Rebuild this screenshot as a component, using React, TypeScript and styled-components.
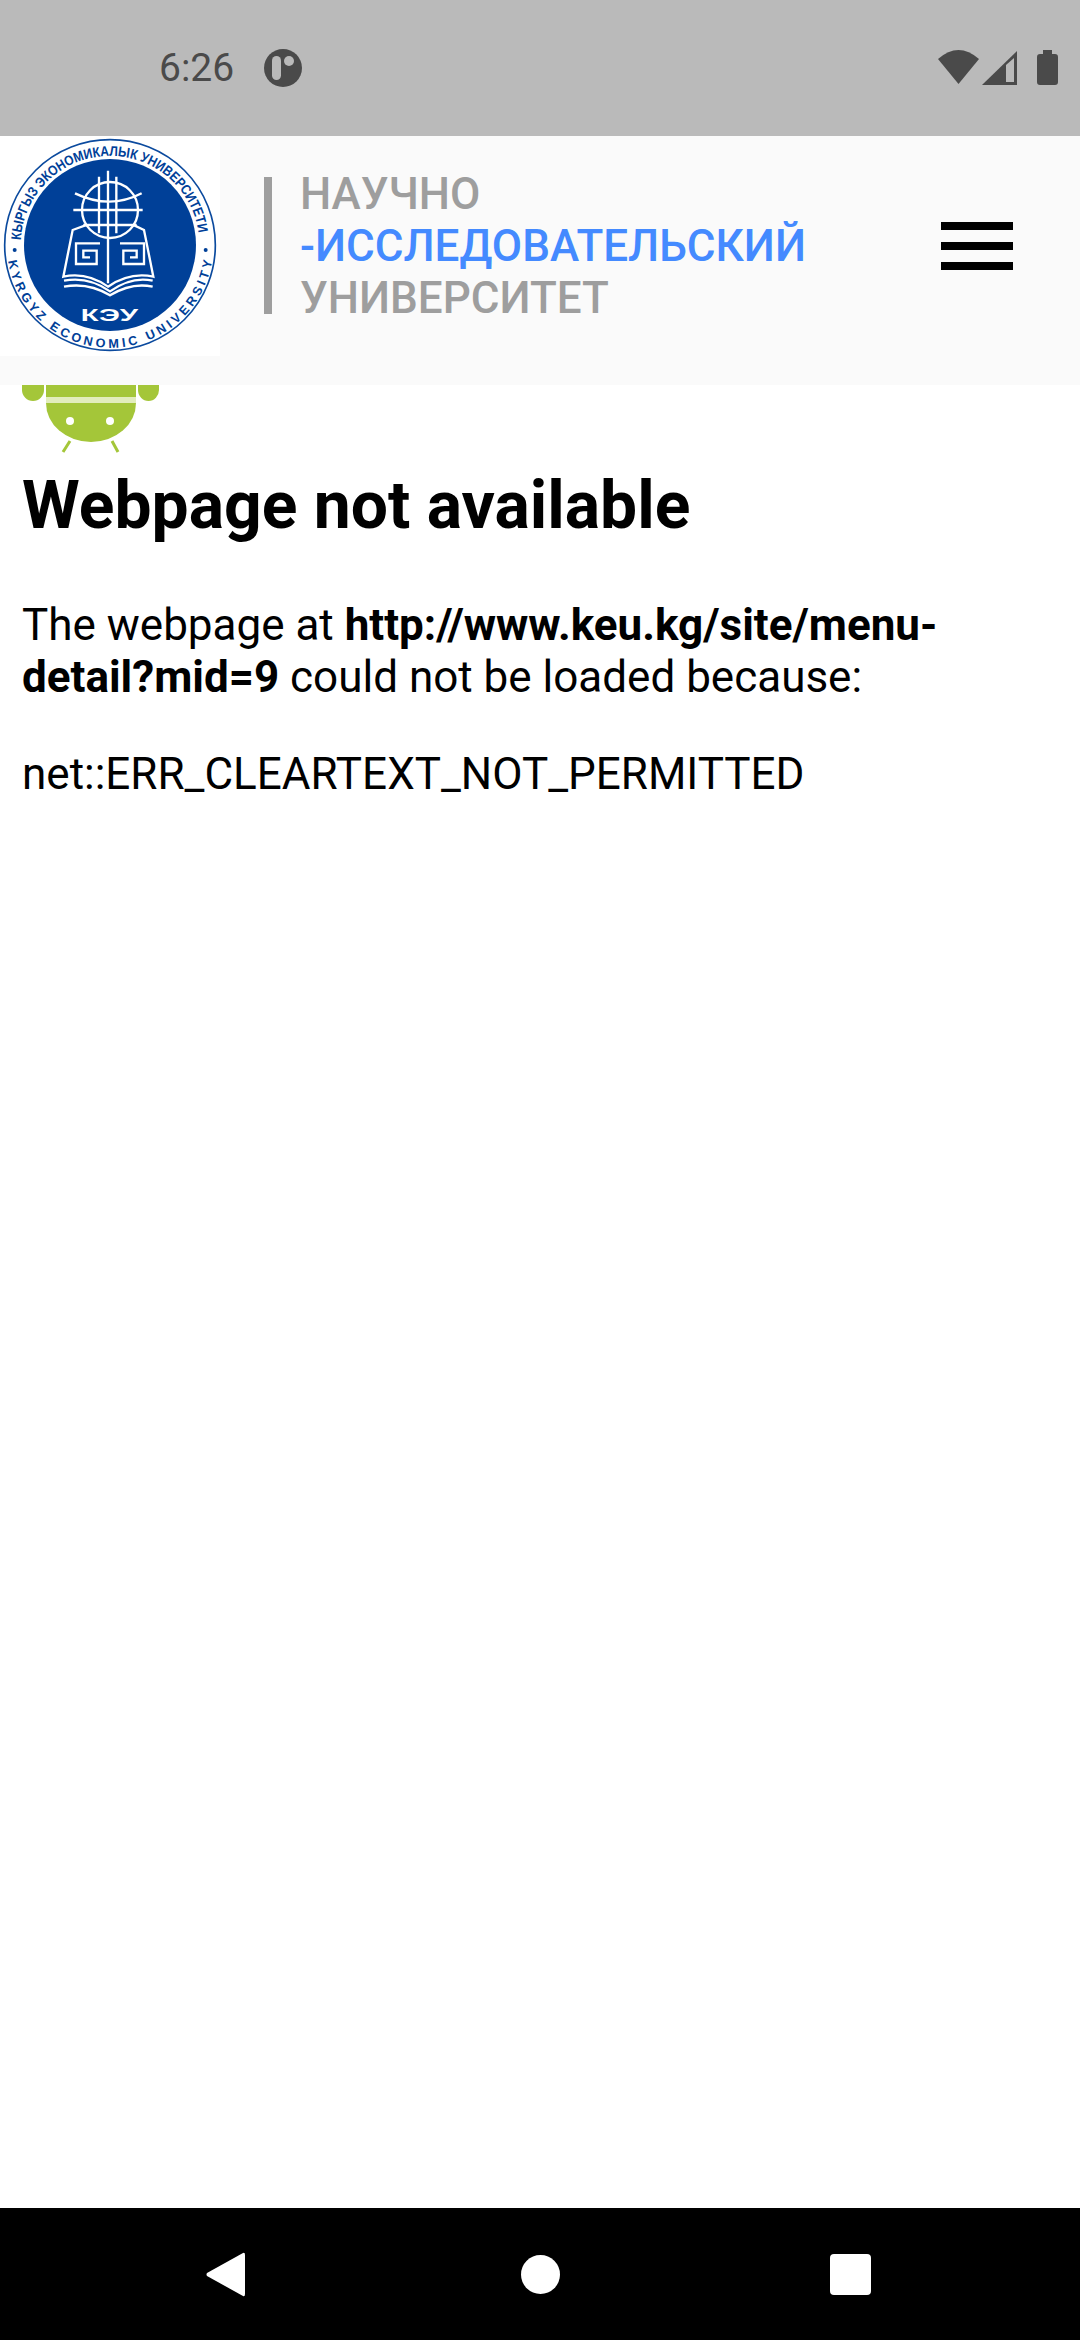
import React from "react";
import styled, { createGlobalStyle } from "styled-components";

const GlobalStyle = createGlobalStyle`
  html, body {
    margin: 0;
    padding: 0;
    background: #ffffff;
    font-family: Roboto, "Noto Sans", sans-serif;
  }
`;

const Screen = styled.div`
  width: 1080px;
  height: 2340px;
  display: flex;
  flex-direction: column;
  overflow: hidden;
  background: #ffffff;
`;

const StatusBar = styled.div`
  height: 136px;
  flex: none;
  background: #bababa;
  display: flex;
  align-items: center;
  justify-content: space-between;
  padding: 0 21px 0 159px;
  color: #4a4a4a;
`;

const StatusLeft = styled.div`
  display: flex;
  align-items: center;
  gap: 30px;
`;

const Clock = styled.span`
  font-size: 39px;
  line-height: 46px;
`;

const StatusIcons = styled.svg`
  display: block;
`;

const Header = styled.header`
  height: 249px;
  flex: none;
  background: #fafafa;
  display: flex;
  align-items: flex-start;
`;

const LogoBox = styled.div`
  width: 220px;
  height: 220px;
  flex: none;
  background: #ffffff;
`;

const Tagline = styled.div`
  margin: 41px 0 0 44px;
  padding-left: 28px;
  border-left: 8px solid #9e9e9e;
  width: 560px;
  height: 137px;
  flex: none;
  display: flex;
  flex-direction: column;
  justify-content: center;
`;

const TagLine = styled.div<{ $accent?: boolean }>`
  font-size: 44px;
  line-height: 52px;
  font-weight: 500;
  white-space: nowrap;
  color: ${(props) => (props.$accent ? "#448aff" : "#9e9e9e")};
`;

const Burger = styled.div`
  width: 72px;
  margin: 86px 0 0 81px;
  display: flex;
  flex-direction: column;
  gap: 12px;
`;

const BurgerBar = styled.span`
  display: block;
  height: 8px;
  background: #000000;
`;

const Content = styled.main`
  flex: 1;
  padding: 0 22px;
  color: #000000;
`;

const AndroidMark = styled.svg`
  display: block;
  margin-bottom: 16px;
`;

const Title = styled.h1`
  margin: 0 0 56px;
  font-size: 66px;
  line-height: 74px;
  font-weight: 700;
`;

const Paragraph = styled.p`
  margin: 0 0 45px;
  font-size: 44px;
  line-height: 52px;
`;

const NavBar = styled.nav`
  height: 132px;
  flex: none;
  background: #000000;
  display: flex;
  align-items: center;
  padding: 0 0 0 206px;
`;

const NavIcon = styled.svg<{ $gap: number }>`
  display: block;
  margin-right: ${(props) => props.$gap}px;
`;

const RING = "#0b4a9e";
const BLUE = "#004098";

const KeuLogo = () => (
  <svg width="220" height="220" viewBox="0 18 660 660">
    <defs>
      <path id="topArc" d="M 62.4 331 A 268 268 0 0 1 597.6 331" />
      <path id="bottomArc" d="M 24 393 A 310 310 0 0 0 636 393" />
    </defs>
    <circle cx="330" cy="345" r="316" fill="#ffffff" stroke={RING} strokeWidth="5" />
    <circle cx="330" cy="345" r="258" fill={BLUE} />
    <text fontFamily="'Liberation Sans', sans-serif" fontWeight="700" fontSize="42" fill={BLUE}>
      <textPath href="#topArc" textLength="790" lengthAdjust="spacingAndGlyphs">
        КЫРГЫЗ ЭКОНОМИКАЛЫК УНИВЕРСИТЕТИ
      </textPath>
    </text>
    <text fontFamily="'Liberation Sans', sans-serif" fontWeight="700" fontSize="38" fill={BLUE}>
      <textPath href="#bottomArc" textLength="875" lengthAdjust="spacing">
        KYRGYZ ECONOMIC UNIVERSITY
      </textPath>
    </text>
    <circle cx="44" cy="360" r="6" fill={BLUE} />
    <circle cx="617" cy="360" r="6" fill={BLUE} />
    <g fill="none" stroke="#ffffff" strokeWidth="7">
      <circle cx="330" cy="240" r="84" />
      <path d="M 297 140 V 310 M 324 122 V 460 M 349 140 V 310" />
      <path d="M 220 240 H 428 M 225 190 Q 330 240 425 190 M 250 285 H 410" />
      <path d="M 262 284 L 218 300 L 190 440 Q 260 425 324 470 Q 390 425 460 440 L 432 300 L 398 284" />
      <path d="M 300 340 H 228 V 402 H 290 V 362 H 250 V 382 H 270" />
      <path d="M 360 340 H 432 V 402 H 370 V 362 H 410 V 382 H 390" />
      <path d="M 192 452 Q 265 438 330 484 Q 395 438 458 452" />
      <path d="M 192 470 Q 265 456 330 496 Q 395 456 458 470" />
    </g>
    <text
      x="328"
      y="574"
      textAnchor="middle"
      fontFamily="'Liberation Sans', sans-serif"
      fontWeight="700"
      fontSize="50"
      fill="#ffffff"
      textLength="172"
      lengthAdjust="spacingAndGlyphs"
    >
      КЭУ
    </text>
  </svg>
);

const App = () => (
  <>
    <GlobalStyle />
    <Screen>
      <StatusBar>
        <StatusLeft>
          <Clock>6:26</Clock>
          <svg width="38" height="38" viewBox="0 0 38 38">
            <circle cx="19" cy="19" r="19" fill="#4a4a4a" />
            <rect x="8" y="7" width="9" height="24" rx="4.5" fill="#bababa" />
            <circle cx="25" cy="12" r="5" fill="#bababa" />
          </svg>
        </StatusLeft>
        <StatusIcons width="121" height="36" viewBox="0 0 121 36">
          <path d="M0 9 Q20.5 -9 41 9 L20.5 34 Z" fill="#4a4a4a" />
          <path d="M44 35 L79 1 V35 Z" fill="#4a4a4a" />
          <path d="M68 15 L76 8 V32 H68 Z" fill="#bababa" />
          <path d="M105 0 H114 V4 H117 Q120 4 120 7 V32 Q120 35 117 35 H102 Q99 35 99 32 V7 Q99 4 102 4 H105 Z" fill="#4a4a4a" />
        </StatusIcons>
      </StatusBar>
      <Header>
        <LogoBox>
          <KeuLogo />
        </LogoBox>
        <Tagline>
          <TagLine>НАУЧНО</TagLine>
          <TagLine $accent>-ИССЛЕДОВАТЕЛЬСКИЙ</TagLine>
          <TagLine>УНИВЕРСИТЕТ</TagLine>
        </Tagline>
        <Burger>
          <BurgerBar />
          <BurgerBar />
          <BurgerBar />
        </Burger>
      </Header>
      <Content>
        <AndroidMark width="140" height="68" viewBox="0 0 140 68">
          <g fill="#a4c639">
            <path d="M0 0 H22 V5 A11 11 0 0 1 0 5 Z" />
            <path d="M116 0 H137 V5 A10.5 11 0 0 1 116 5 Z" />
            <path d="M24 0 H114 V12 H24 Z" />
            <path d="M24 18 H114 A45 39 0 0 1 24 18 Z" />
          </g>
          <rect x="24" y="12" width="90" height="6" fill="#e2edbc" />
          <circle cx="48" cy="36" r="4" fill="#ffffff" />
          <circle cx="88" cy="36" r="4" fill="#ffffff" />
          <path d="M48 56 L41 67 M90 56 L96 67" stroke="#a4c639" strokeWidth="3" fill="none" />
        </AndroidMark>
        <Title>Webpage not available</Title>
        <Paragraph>
          The webpage at <b>http://www.keu.kg/site/menu-detail?mid=9</b> could not be loaded because:
        </Paragraph>
        <Paragraph>net::ERR_CLEARTEXT_NOT_PERMITTED</Paragraph>
      </Content>
      <NavBar>
        <NavIcon $gap={276} width="39" height="45" viewBox="0 0 39 45">
          <path d="M37 1 Q39 0 39 3 V42 Q39 45 37 44 L1 24 Q0 22.5 1 21 Z" fill="#ffffff" />
        </NavIcon>
        <NavIcon $gap={270} width="39" height="39" viewBox="0 0 39 39">
          <circle cx="19.5" cy="19.5" r="19.5" fill="#ffffff" />
        </NavIcon>
        <NavIcon $gap={0} width="41" height="41" viewBox="0 0 41 41">
          <rect width="41" height="41" rx="4" fill="#ffffff" />
        </NavIcon>
      </NavBar>
    </Screen>
  </>
);

export default App;
